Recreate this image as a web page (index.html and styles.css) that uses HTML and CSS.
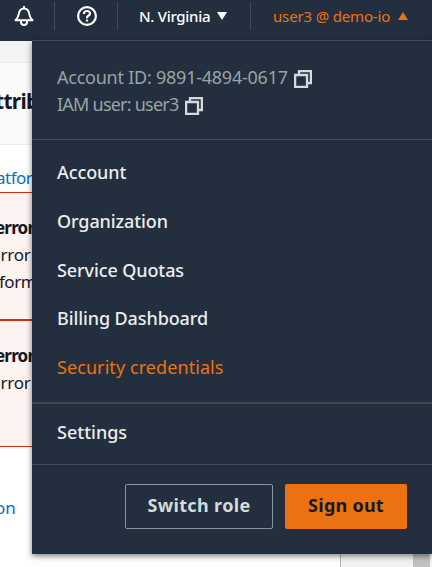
FILE: index.html
```
<!DOCTYPE html>
<html lang="en">
<head>
<meta charset="utf-8">
<title>Account menu</title>
<link rel="stylesheet" href="styles.css">
</head>
<body>
<header class="topbar">
  <div class="cell bell"><svg width="20" height="22" viewBox="0 0 20 22" fill="none" stroke="#fff" stroke-width="2"><path d="M10 1v2M1.500 15.200h17c-2.500-2-2.800-3-3.200-6C14.800 5.500 13 3.500 10 3.500S5.200 5.500 4.700 9.200c-.4 3-.7 4-3.200 6z" stroke-linejoin="round"/><path d="M7 15.500v1.500a3 3 0 0 0 6 0v-1.500"/></svg></div>
  <div class="cell help"><svg width="20" height="20" viewBox="0 0 20 20" fill="none" stroke="#fff" stroke-width="2.200"><circle cx="10" cy="10" r="8.900"/><path d="M7 8V7.500C7 5.900 8.200 5 10 5s3 1 3 2.500S12 9.500 11 10s-1 1-1 2.200M10 13.500v2"/></svg></div>
  <div class="cell region"><span class="t-region">N. Virginia</span><svg width="10" height="8"><path d="M0 0h10L5 8z" fill="#fff"/></svg></div>
  <div class="cell user"><span class="t-user">user3 @ demo-io</span><svg width="10" height="8"><path d="M0 8h10L5 0z" fill="#ec7211"/></svg></div>
</header>
<main class="page">
  <div class="gap"></div>
  <div class="heading"><b>ttrib</b></div>
  <div class="crumb">atfor</div>
  <div class="alert first"><b>error</b><span>error</span><span class="form">form</span></div>
  <div class="alert second"><b>error</b><span>error</span></div>
  <div class="bottom"><div class="link">on</div><div class="side"><i></i></div></div>
</main>
<section class="menu">
  <div class="identity">
    <div class="idline"><span class="t-id">Account ID: 9891-4894-0617</span><svg width="18" height="18" viewBox="0 0 18 18" fill="none" stroke="#d5dbdb" stroke-width="2.300"><path d="M1.100 5h11.900v11.900H1.100zM5 5V1.100h11.900v11.900h-3.900"/></svg></div>
    <div class="idline"><span class="t-iam">IAM user: user3</span><svg width="18" height="18" viewBox="0 0 18 18" fill="none" stroke="#d5dbdb" stroke-width="2.300"><path d="M1.100 5h11.900v11.900H1.100zM5 5V1.100h11.900v11.900h-3.900"/></svg></div>
  </div>
  <nav class="links">
    <a class="t-account">Account</a>
    <a class="t-org">Organization</a>
    <a class="t-quota">Service Quotas</a>
    <a class="t-bill">Billing Dashboard</a>
    <a class="t-sec">Security credentials</a>
  </nav>
  <div class="settings"><a class="t-set">Settings</a></div>
  <div class="actions"><button class="switch">Switch role</button><button class="signout">Sign out</button></div>
</section>
</body>
</html>
```
FILE: styles.css
```
* { box-sizing: border-box; }
body { margin: 0; width: 432px; height: 567px; overflow: hidden; position: relative; background: #fff; font-family: "Noto Sans", sans-serif; color: #16191f; }
svg { display: block; flex: none; }
.topbar { height: 41px; background: #232f3e; display: flex; padding-top: 2px; }
.cell { height: 28px; display: flex; align-items: center; border-right: 1px solid #414d5c; white-space: nowrap; }
.bell { width: 55px; padding-left: 14px; }
.help { width: 63px; padding-left: 22px; }
.region { width: 133px; padding-left: 21px; color: #fff; font-size: 15px; font-weight: 500; }
.t-region { width: 78px; letter-spacing: -.3px; }
.user { width: 181px; border: 0; padding-left: 22px; color: #ec7211; font-size: 15px; }
.t-user { width: 125px; letter-spacing: -.16px; }
.page { width: 432px; font-size: 17px; }
.gap { height: 22px; background: #f2f3f3; border-bottom: 1px solid #eaeded; }
.heading { height: 82px; background: #fafafa; border-bottom: 1px solid #eaeded; line-height: 76px; font-size: 21px; text-indent: -5px; letter-spacing: -.7px; }
.crumb { height: 47px; line-height: 65px; color: #0073bb; text-indent: -4px; letter-spacing: -.5px; }
.alert { background: #fdf3f1; border: solid #d13212; border-width: 1px 0; display: flex; flex-direction: column; line-height: 27px; text-indent: -5px; padding-top: 21px; }
.alert b { letter-spacing: -.8px; }
.alert span { text-indent: -9px; letter-spacing: -.2px; }
.alert .form { text-indent: -1px; letter-spacing: -.5px; }
.first { height: 128px; }
.second { height: 127px; }
.bottom { height: 120px; display: flex; justify-content: space-between; }
.link { color: #0073bb; line-height: 121px; text-indent: -5px; }
.side { width: 92px; background: #f2f3f3; border-left: 1px solid #aab7b8; padding-left: 72px; }
.side i { display: block; width: 17px; height: 120px; background: #c1c1c1; }
.menu { position: absolute; left: 32px; top: 40px; width: 400px; height: 514px; background: #232f3e; border-top: 1px solid #414d5c; box-shadow: 0 2px 6px rgba(0,0,0,.5); font-size: 18px; white-space: nowrap; }
.identity { height: 99px; padding: 23px 25px 0; border-bottom: 1px solid #414d5c; color: #95a5a6; }
.idline { display: flex; align-items: center; height: 27px; line-height: 27px; }
.idline svg { margin-top: 2px; }
.t-id { width: 237px; letter-spacing: -.24px; }
.t-iam { width: 128px; letter-spacing: -.77px; }
.links { height: 264px; padding: 8px 25px 0; border-bottom: 2px solid #414750; display: flex; flex-direction: column; color: #eaeded; font-weight: 500; }
.links a { height: 48.750px; line-height: 49.500px; }
.t-account, .t-org, .t-quota, .t-bill { letter-spacing: -.1px; }
.links .t-sec { color: #ec7211; font-weight: 400; letter-spacing: .08px; }
.settings { height: 61px; padding-left: 25px; line-height: 56px; border-bottom: 1px solid #414d5c; color: #eaeded; font-weight: 500; }
.actions { display: flex; justify-content: flex-end; gap: 12px; padding: 19px 25px 0; }
button { height: 45px; padding: 0 0 4px; font: 700 18px "Noto Sans", sans-serif; border-radius: 2px; }
.switch { width: 148px; background: none; border: 1px solid #879596; color: #d5dbdb; letter-spacing: .35px; }
.signout { width: 122px; background: #ec7211; border: 0; color: #16191f; letter-spacing: .25px; }
```
